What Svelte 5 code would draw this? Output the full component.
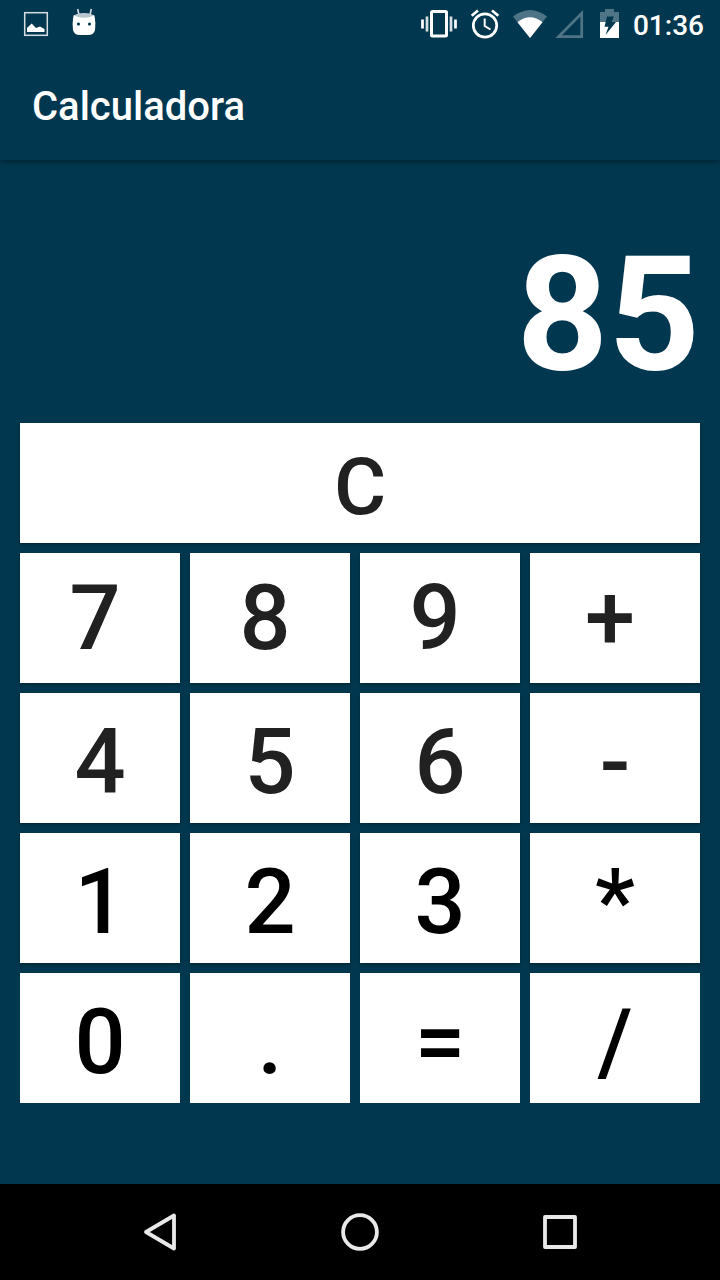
<script>
  const keys = [
    { t: '7', k: 'top' }, { t: '8', k: 'top' }, { t: '9', k: 'top' }, { t: '+', k: 'top' },
    { t: '4' }, { t: '5' }, { t: '6' }, { t: '-' },
    { t: '1', k: 'dark' }, { t: '2', k: 'dark' }, { t: '3', k: 'dark' }, { t: '*', k: 'dark' },
    { t: '0', k: 'dark last' }, { t: '.', k: 'dark last' }, { t: '=', k: 'dark last' }, { t: '/', k: 'dark last' }
  ];
</script>

<div class="screen">
  <header>
    <div class="status">
      <svg class="notifications" width="100" height="48" viewBox="0 0 100 48">
        <rect x="24.700" y="12.700" width="22.600" height="22.600" fill="none" stroke="#d5dde1" stroke-width="1.500" />
        <path d="M27 32V28L31.700 23.500L36 28L40 26.500L44.500 29V32Z" fill="#fff" />
        <path d="M77.700 9L79 15M91.300 9L90 15" stroke="#d5dde1" stroke-width="1.600" />
        <path d="M73.500 15.500Q84 11 94.500 15.500Q96 23 95 30Q94 35 88 35H80Q74 35 73 30Q72 23 73.500 15.500Z" fill="#fff" />
        <path d="M74.500 15.300Q84 11 93.500 15.300Q91 17.700 84 17.700Q77 17.700 74.500 15.300Z" fill="#b8c6cd" />
        <circle cx="78.500" cy="24" r="1.600" fill="#02384f" />
        <circle cx="89.500" cy="24" r="1.600" fill="#02384f" />
      </svg>
      <div class="right">
        <svg width="204" height="48" viewBox="420 0 204 48">
          <rect x="431.500" y="11.500" width="15" height="24.500" rx="1" fill="none" stroke="#fff" stroke-width="3" />
          <path d="M422.500 19.500V28.500M455.500 19.500V28.500" stroke="#fff" stroke-width="2.700" />
          <path d="M427 16.500V31.500M451 16.500V31.500" stroke="#d5dfe3" stroke-width="2.700" />
          <circle cx="485" cy="25.500" r="11.700" fill="none" stroke="#fff" stroke-width="2.700" />
          <path d="M484.700 18.500V26L490.500 29.500" fill="none" stroke="#fff" stroke-width="2" />
          <path d="M471.700 15.800L478 10.500M498.300 15.800L492 10.500" stroke="#fff" stroke-width="2.700" />
          <path d="M513 16.500Q530 3.500 547 16.500L530 38Z" fill="#4f7486" />
          <path d="M517.500 22.200Q530 12.500 542.500 22.200L530 38Z" fill="#fff" />
          <path d="M558.500 36.700H581.700V13.300Z" fill="none" stroke="#4f7486" stroke-width="2.700" />
          <path d="M600 12H605V9H614V12H619V22H600Z" fill="#4f7486" />
          <path d="M600 22H619V38H600Z" fill="#fff" />
          <path d="M607 16.500H614L611.500 22H616L605.500 35L608.500 26.700H604.500Z" fill="#02384f" />
        </svg>
        <span class="time">01:36</span>
      </div>
    </div>
    <h1>Calculadora</h1>
  </header>
  <main>
    <div class="display">85</div>
    <button class="clear"><span>C</span></button>
    <div class="keys">
      {#each keys as key}
        <button class={key.k}><span>{key.t}</span></button>
      {/each}
    </div>
  </main>
  <nav>
    <svg width="720" height="96" viewBox="0 0 720 96" fill="none" stroke="#e9e9e9" stroke-width="3.800" stroke-linejoin="round">
      <path d="M146 48L174 31.500V64.500Z" />
      <circle cx="360" cy="48" r="16.900" />
      <rect x="545" y="33" width="30" height="30" />
    </svg>
  </nav>
</div>

<style>
  :global(body) { margin: 0; background: #02384f; }
  .screen {
    width: 720px; height: 1280px; display: flex; flex-direction: column;
    background: #02384f; font-family: Roboto, sans-serif; color: #fff; overflow: hidden;
  }
  header { height: 160px; flex: none; box-shadow: 0 2px 6px rgba(0, 0, 0, .4); }
  .status { height: 48px; display: flex; justify-content: space-between; }
  svg { display: block; flex: none; }
  .right { display: flex; padding-right: 16px; gap: 9px; }
  .time { font-size: 28px; font-weight: 500; line-height: 52px; }
  h1 { margin: 0; padding-left: 32px; font-size: 40px; font-weight: 500; line-height: 118px; }
  main { flex: 1; padding: 0 20px; }
  .display {
    height: 263px; box-sizing: border-box; padding-top: 61px; text-align: right;
    font-size: 160px; line-height: 188px; font-weight: 700;
  }
  button {
    border: 0; padding: 0; margin: 0; border-radius: 0; background: #fff; color: #212121;
    font: 500 90px/106px Roboto, sans-serif; box-shadow: 0 2px 4px rgba(0, 0, 0, .3);
    display: flex; align-items: center; justify-content: center; min-width: 0;
  }
  button span { position: relative; top: 5px; }
  .top span { top: 1px; left: -5px; }
  .dark { color: #000; }
  .last { box-shadow: none; }
  .clear { width: 680px; height: 120px; font-size: 80px; line-height: 94px; }
  .clear span { top: 4px; }
  .keys {
    margin-top: 10px; display: grid; grid-template-columns: 160px 160px 160px 170px;
    grid-auto-rows: 130px; gap: 10px;
  }
  nav { height: 96px; background: #000; flex: none; }
</style>
